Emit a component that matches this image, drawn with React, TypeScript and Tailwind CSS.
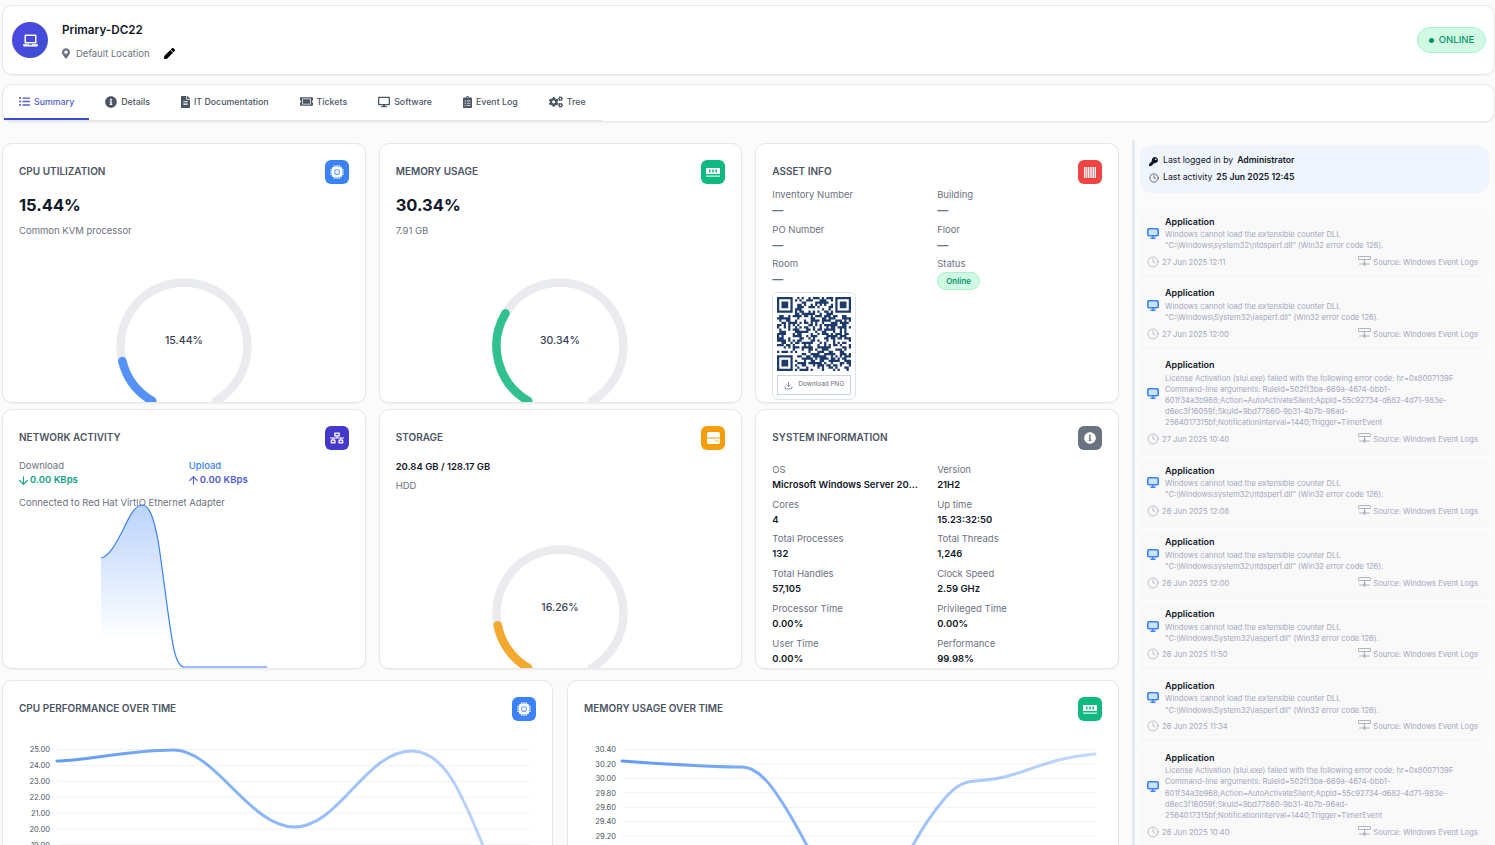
import type { ReactNode } from 'react';
import {
  FaClipboardList,
  FaCogs,
  FaDesktop,
  FaFileAlt,
  FaInfoCircle,
  FaKey,
  FaLaptop,
  FaListUl,
  FaMapMarkerAlt,
  FaNetworkWired,
  FaPen,
  FaTicketAlt,
} from 'react-icons/fa';
import { BsCpuFill } from 'react-icons/bs';
import { ArrowDown, ArrowUp, Clock, Download } from 'lucide-react';

const tabs = [
  { label: 'Summary', icon: <FaListUl size={11} />, active: true },
  { label: 'Details', icon: <FaInfoCircle size={12} /> },
  { label: 'IT Documentation', icon: <FaFileAlt className="h-3 w-[9px]" /> },
  { label: 'Tickets', icon: <FaTicketAlt size={13} /> },
  { label: 'Software', icon: <FaDesktop size={12} /> },
  { label: 'Event Log', icon: <FaClipboardList className="h-3 w-[9px]" /> },
  { label: 'Tree', icon: <FaCogs size={14} /> },
];

const ntds = ['Windows cannot load the extensible counter DLL', '"C:\\Windows\\system32\\ntdsperf.dll" (Win32 error code 126).'];
const ias = ['Windows cannot load the extensible counter DLL', '"C:\\Windows\\System32\\iasperf.dll" (Win32 error code 126).'];
const license = [
  'License Activation (slui.exe) failed with the following error code: hr=0x8007139F',
  'Command-line arguments: RuleId=502ff3ba-669a-4674-bbb1-',
  '601f34a3b968;Action=AutoActivateSilent;AppId=55c92734-d682-4d71-983e-',
  'd6ec3f16059f;SkuId=9bd77860-9b31-4b7b-96ad-',
  '2564017315bf;NotificationInterval=1440;Trigger=TimerEvent',
];

const events = [
  { lines: ntds, date: '27 Jun 2025 12:11' },
  { lines: ias, date: '27 Jun 2025 12:00' },
  { lines: license, date: '27 Jun 2025 10:40' },
  { lines: ntds, date: '26 Jun 2025 12:08' },
  { lines: ntds, date: '26 Jun 2025 12:00' },
  { lines: ias, date: '26 Jun 2025 11:50' },
  { lines: ias, date: '26 Jun 2025 11:34' },
  { lines: license, date: '26 Jun 2025 10:40' },
];

const systemInfo = [
  ['OS', 'Microsoft Windows Server 2022 Standard'],
  ['Version', '21H2'],
  ['Cores', '4'],
  ['Up time', '15.23:32:50'],
  ['Total Processes', '132'],
  ['Total Threads', '1,246'],
  ['Total Handles', '57,105'],
  ['Clock Speed', '2.59 GHz'],
  ['Processor Time', '0.00%'],
  ['Privileged Time', '0.00%'],
  ['User Time', '0.00%'],
  ['Performance', '99.98%'],
];

const assetInfo = ['Inventory Number', 'Building', 'PO Number', 'Floor'];

function MemoryIcon() {
  return (
    <svg width="14" height="11" viewBox="0 0 14 11" fill="#fff">
      <path fillRule="evenodd" d="M0 1h14v6H0zM3 2.6v2.8h1.5V2.6zM6.2 2.6v2.8h1.5V2.6zM9.5 2.6v2.8H11V2.6z" />
      <path d="M0 8.4h14v1.4H0z" fillOpacity="0.85" />
    </svg>
  );
}

function BarcodeIcon() {
  return (
    <svg width="12" height="11" viewBox="0 0 12 11" fill="#fff">
      <rect x="0" width="1.5" height="11" />
      <rect x="2.2" width="0.8" height="11" />
      <rect x="3.6" width="1.5" height="11" />
      <rect x="5.7" width="1" height="11" />
      <rect x="7.3" width="0.8" height="11" />
      <rect x="8.6" width="1.4" height="11" />
      <rect x="10.6" width="1.4" height="11" />
    </svg>
  );
}

function DiskIcon() {
  return (
    <svg width="13" height="12" viewBox="0 0 13 12" fill="#fff">
      <path d="M2 0h9a2 2 0 0 1 2 2v3.4H0V2a2 2 0 0 1 2-2z" />
      <path fillRule="evenodd" d="M0 6.4h13V10a2 2 0 0 1-2 2H2a2 2 0 0 1-2-2zM8.2 8.6v1.1h1.1V8.6zM10.2 8.6v1.1h1.1V8.6z" />
    </svg>
  );
}

function MonitorIcon() {
  return (
    <svg width="12" height="11" viewBox="0 0 12 11" fill="none" className="shrink-0">
      <rect x="0.8" y="0.8" width="10.4" height="7" rx="1" fill="#93c5fd" fillOpacity="0.45" stroke="#3b82f6" strokeWidth="1.6" />
      <path d="M6 8v2M3.5 10.2h5" stroke="#3b82f6" strokeWidth="1.4" />
    </svg>
  );
}

function SourceIcon() {
  return (
    <svg width="13" height="11" viewBox="0 0 13 11" fill="none" stroke="#9ca3af" strokeWidth="0.8" className="-mt-[2px]">
      <rect x="0.5" y="0.5" width="12" height="3" rx="0.5" />
      <path d="M6.5 3.5V9M1 8h3.8M8.2 8H12" />
      <circle cx="6.5" cy="8" r="1.4" />
    </svg>
  );
}

function Card({ className, children }: { className?: string; children: ReactNode }) {
  return (
    <div className={`relative overflow-hidden rounded-[10px] border border-[#e5e7eb] bg-white px-4 pt-4 shadow-[0_1px_2px_rgba(0,0,0,0.05)] ${className ?? ''}`}>
      {children}
    </div>
  );
}

function CardHead({ title, color, icon }: { title: string; color: string; icon: ReactNode }) {
  return (
    <div className="flex h-6 items-start justify-between">
      <span className="text-[10px] leading-[22px] font-semibold text-[#4b5563]">{title}</span>
      <span className={`flex h-6 w-6 items-center justify-center rounded-md text-white ${color}`}>{icon}</span>
    </div>
  );
}

function polar(angle: number, r: number) {
  const rad = (angle * Math.PI) / 180;
  return `${(72 - r * Math.sin(rad)).toFixed(2)} ${(72 + r * Math.cos(rad)).toFixed(2)}`;
}

function Gauge({ value, color, className }: { value: number; color: string; className: string }) {
  const r = 63.5;
  const end = 30 + value * 3;
  return (
    <svg width="144" height="144" viewBox="0 0 144 144" className={`mx-auto block ${className}`}>
      <path d={`M${polar(30, r)} A${r} ${r} 0 1 1 ${polar(330, r)}`} fill="none" stroke="#e9ebef" strokeWidth="8.5" strokeLinecap="round" />
      <path d={`M${polar(30, r)} A${r} ${r} 0 0 1 ${polar(end, r)}`} fill="none" stroke={color} strokeOpacity="0.85" strokeWidth="8.5" strokeLinecap="round" />
      <text x="72" y="70" textAnchor="middle" fontSize="10.5" fontWeight="500" fill="#374151">
        {value.toFixed(2)}%
      </text>
    </svg>
  );
}

function QrCode() {
  const n = 33;
  const finder = (x: number, y: number, ox: number, oy: number) => {
    const dx = x - ox;
    const dy = y - oy;
    if (dx < -1 || dy < -1 || dx > 7 || dy > 7) return null;
    if (dx < 0 || dy < 0 || dx > 6 || dy > 6) return false;
    if (dx === 0 || dy === 0 || dx === 6 || dy === 6) return true;
    return dx >= 2 && dx <= 4 && dy >= 2 && dy <= 4;
  };
  let seed = 40213;
  const next = () => {
    seed = (seed * 16807) % 2147483647;
    return seed / 2147483647;
  };
  const cells: string[] = [];
  for (let y = 0; y < n; y++) {
    for (let x = 0; x < n; x++) {
      const f = finder(x, y, 0, 0) ?? finder(x, y, n - 7, 0) ?? finder(x, y, 0, n - 7);
      const on = f === null ? next() > 0.48 : f;
      if (on) cells.push(`M${x} ${y}h1v1h-1z`);
    }
  }
  return (
    <svg viewBox={`0 0 ${n} ${n}`} className="block h-[74px] w-[74px]">
      <path d={cells.join('')} fill="#1e3a6b" />
    </svg>
  );
}

function AssetCell({ label }: { label: string }) {
  return (
    <div>
      <div className="leading-[15px]">{label}</div>
      <div className="text-[11px] leading-[16.5px] font-bold">—</div>
    </div>
  );
}

function EventRow({ lines, date }: { lines: string[]; date: string }) {
  return (
    <div className="rounded-md bg-[#f9f9fa] px-[7px] pt-[5.5px] pb-[6.4px] shadow-[0_1px_3px_rgba(0,0,0,0.03)]">
      <div className="flex items-center gap-[6px]">
        <MonitorIcon />
        <div>
          <div className="mb-[1px] text-[9px] leading-[12.5px] font-semibold text-[#111827]">Application</div>
          {lines.map((l, i) => (
            <div key={i} className="text-[7.6px] leading-[11.2px] text-[#a3a7ba]">{l}</div>
          ))}
        </div>
      </div>
      <div className="mt-1 flex h-[14px] items-center justify-between pr-[4px] text-[7.6px] text-[#a3a7ba]">
        <span className="flex items-center gap-[3px]">
          <Clock size={12} strokeWidth={1.3} className="-mt-[1px] text-[#9ca3af]" />
          {date}
        </span>
        <span className="flex items-center gap-[2px]">
          <SourceIcon />
          Source: Windows Event Logs
        </span>
      </div>
    </div>
  );
}

function TimeChart({ box, ticks, labelX, x1, x2, path, id }: {
  box: string;
  ticks: [string, number][];
  labelX: number;
  x1: number;
  x2: number;
  path: string;
  id: string;
}) {
  return (
    <svg viewBox={box} className="-mx-4 mt-[14px] block h-[130px] w-[549px]">
      <defs>
        <linearGradient id={id} gradientUnits="userSpaceOnUse" x1={x1} x2={x2} y1="0" y2="0">
          <stop offset="0" stopColor="#3b82f6" stopOpacity="0.8" />
          <stop offset="1" stopColor="#3b82f6" stopOpacity="0.3" />
        </linearGradient>
      </defs>
      {ticks.map(([label, y]) => (
        <g key={label}>
          <line x1={x1} x2={x2} y1={y} y2={y} stroke="#f0f1f3" />
          <text x={labelX} y={y + 2.7} textAnchor="end" fontSize="7.5" fill="#4b5563">{label}</text>
        </g>
      ))}
      <path d={path} fill="none" stroke={`url(#${id})`} strokeWidth="3" strokeLinecap="round" />
    </svg>
  );
}

export default function App() {
  return (
    <div className="h-[845px] w-[1495px] overflow-hidden bg-[#fbfbfb] [font-family:Inter,sans-serif]">
      {/* header */}
      <div className="ml-[2px] mt-[5px] flex h-[70px] w-[1493px] items-center justify-between rounded-[10px] border border-[#e5e7eb] bg-white pl-[9px] pr-2 shadow-[0_1px_2px_rgba(0,0,0,0.05)]">
        <div className="flex items-center gap-[14px]">
          <div className="flex h-9 w-9 items-center justify-center rounded-full bg-gradient-to-br from-[#4f46e5] to-[#3b4fd0] text-white">
            <FaLaptop size={15} />
          </div>
          <div className="pt-[3px]">
            <div className="text-[11.7px] leading-4 font-semibold text-[#111827]">Primary-DC22</div>
            <div className="mt-[8px] flex items-center text-[9.5px] leading-4 text-[#6b7280]">
              <FaMapMarkerAlt className="mr-[6px] h-[11px] w-2 text-[#6b7280]" />
              Default Location
              <FaPen size={11} className="ml-[14px] text-black" />
            </div>
          </div>
        </div>
        <div className="flex h-[26px] w-[69px] items-center justify-center gap-[5px] rounded-full border border-[#a7f3d0] bg-[#d1fae5] text-[9.5px] font-medium text-[#059669]">
          <span className="h-[5px] w-[5px] rounded-full bg-[#059669]" />
          ONLINE
        </div>
      </div>

      {/* tabs */}
      <div className="ml-[2px] mt-[9px] h-[38px] w-[1493px] rounded-[10px] border border-[#e5e7eb] bg-white pl-[1px] shadow-[0_1px_2px_rgba(0,0,0,0.05)]">
        <div className="flex h-[36px] w-[598px] gap-x-[1px] border-b border-[#e5e7eb]">
          {tabs.map((t) => (
            <div
              key={t.label}
              className={`flex shrink-0 items-center gap-1 border-b-2 px-[15px] text-[8.8px] font-medium whitespace-nowrap ${t.active ? 'border-[#3b4fd0] text-[#4f5bd5]' : 'border-transparent text-[#4b5563]'}`}
            >
              {t.icon}
              {t.label}
            </div>
          ))}
        </div>
      </div>

      <div className="mt-[21px] flex items-start">
        <div className="ml-[2px] w-[1117px] shrink-0">
          <div className="grid grid-cols-3 gap-x-[13px] gap-y-[6px]">
            <Card className="h-[260px]">
              <CardHead title="CPU UTILIZATION" color="bg-[#3b82f6]" icon={<BsCpuFill size={14} />} />
              <div className="mt-2 h-[26px] text-[16.5px] leading-[26px] font-bold text-[#111827]">15.44%</div>
              <div className="mt-[6px] text-[9.5px] leading-[14px] text-[#6b7280]">Common KVM processor</div>
              <Gauge value={15.44} color="#3b82f6" className="mt-[36px]" />
            </Card>
            <Card className="h-[260px]">
              <CardHead title="MEMORY USAGE" color="bg-[#10b981]" icon={<MemoryIcon />} />
              <div className="mt-2 h-[26px] text-[16.5px] leading-[26px] font-bold text-[#111827]">30.34%</div>
              <div className="mt-[6px] text-[9.5px] leading-[14px] text-[#6b7280]">7.91 GB</div>
              <Gauge value={30.34} color="#10b981" className="mt-[36px]" />
            </Card>
            <Card className="h-[260px]">
              <CardHead title="ASSET INFO" color="bg-[#ef4444]" icon={<BarcodeIcon />} />
              <div className="mt-[3px] grid grid-cols-2 gap-y-[3px] text-[9.5px] text-[#6b7280]">
                {assetInfo.map((label) => (
                  <AssetCell key={label} label={label} />
                ))}
                <AssetCell label="Room" />
                <div>
                  <div className="leading-[15px]">Status</div>
                  <span className="mt-[1px] flex h-[18px] w-[43px] items-center justify-center rounded-full border border-[#a7f3d0] bg-[#d1fae5] text-[8px] font-semibold text-[#059669]">Online</span>
                </div>
              </div>
              <div className="mt-[2px] w-[84px] rounded-md border border-[#dbe3ee] p-1">
                <QrCode />
                <div className="mt-1 flex h-5 items-center justify-center gap-[5px] border border-[#cbd5e1] text-[6.4px] text-[#6b7280]">
                  <Download size={9} />
                  Download PNG
                </div>
              </div>
            </Card>

            <Card className="h-[260px]">
              <CardHead title="NETWORK ACTIVITY" color="bg-[#4338ca]" icon={<FaNetworkWired size={14} />} />
              <div className="mt-[8px] grid grid-cols-2 gap-x-[10px] text-[9.5px]">
                <div>
                  <div className="leading-[15px] text-[#6b7280]">Download</div>
                  <div className="flex items-center leading-[14px] font-semibold text-[#10a37f]">
                    <ArrowDown size={13} strokeWidth={2} className="-ml-[2px]" />0.00 KBps
                  </div>
                </div>
                <div>
                  <div className="leading-[15px] font-medium text-[#3b82f6]">Upload</div>
                  <div className="flex items-center leading-[14px] font-semibold text-[#4f5bd5]">
                    <ArrowUp size={13} strokeWidth={2} className="-ml-[2px]" />0.00 KBps
                  </div>
                </div>
              </div>
              <div className="mt-[9px] text-[9.5px] leading-[14px] text-[#6b7280]">Connected to Red Hat VirtIO Ethernet Adapter</div>
              <svg viewBox="101 502 170 170" className="absolute top-[92px] left-[98px] h-[170px] w-[170px]">
                <defs>
                  <linearGradient id="netFill" gradientUnits="userSpaceOnUse" x1="0" x2="0" y1="505" y2="640">
                    <stop offset="0" stopColor="#3b82f6" stopOpacity="0.35" />
                    <stop offset="1" stopColor="#3b82f6" stopOpacity="0" />
                  </linearGradient>
                </defs>
                <path d="M101 558 C110 556 116 543 123 530 C129 517 135 505 142 505 C150 505 154 520 158 540 C163 570 168 620 174 650 C177 662 180 667 184 667 L101 667Z" fill="url(#netFill)" />
                <path d="M101 558 C110 556 116 543 123 530 C129 517 135 505 142 505 C150 505 154 520 158 540 C163 570 168 620 174 650 C177 662 180 667 184 667 L267 667" fill="none" stroke="#3b82f6" strokeWidth="1.2" />
              </svg>
            </Card>
            <Card className="h-[260px]">
              <CardHead title="STORAGE" color="bg-[#f59e0b]" icon={<DiskIcon />} />
              <div className="mt-[10px] text-[9.5px] leading-[14px] font-semibold text-[#111827]">20.84 GB / 128.17 GB</div>
              <div className="mt-[5px] text-[9.5px] leading-[14px] text-[#6b7280]">HDD</div>
              <Gauge value={16.26} color="#f59e0b" className="mt-[48px]" />
            </Card>
            <Card className="h-[260px]">
              <CardHead title="SYSTEM INFORMATION" color="bg-[#6b7280]" icon={<FaInfoCircle size={12} />} />
              <div className="mt-[12px] grid grid-cols-2 gap-y-[4.5px] text-[9.5px]">
                {systemInfo.map(([label, value]) => (
                  <div key={label} className="min-w-0 pr-[17px]">
                    <div className="leading-[16px] text-[#6b7280]">{label}</div>
                    <div className="truncate leading-[14.2px] font-semibold text-[#111827]">{value}</div>
                  </div>
                ))}
              </div>
            </Card>
          </div>

          <div className="mt-[11px] grid grid-cols-[551px_552px] gap-x-[14px]">
            <Card className="h-[300px]">
              <CardHead title="CPU PERFORMANCE OVER TIME" color="bg-[#3b82f6]" icon={<BsCpuFill size={14} />} />
              <TimeChart
                id="cpuLine"
                box="3 735 549 130"
                labelX={50}
                x1={57}
                x2={530}
                ticks={[['25.00', 749.5], ['24.00', 765.4], ['23.00', 781.3], ['22.00', 797.2], ['21.00', 813.1], ['20.00', 829], ['19.00', 844.9]]}
                path="M57 761 C90 760 130 750 174 750 C215 750 250 827 294 827 C340 827 365 751 412 751 C450 751 468 812 490 862"
              />
            </Card>
            <Card className="h-[300px]">
              <CardHead title="MEMORY USAGE OVER TIME" color="bg-[#10b981]" icon={<MemoryIcon />} />
              <TimeChart
                id="memLine"
                box="568 735 549 130"
                labelX={616}
                x1={622}
                x2={1097}
                ticks={[['30.40', 749.5], ['30.20', 764], ['30.00', 778.4], ['29.80', 792.8], ['29.60', 807.2], ['29.40', 821.6], ['29.20', 836]]}
                path="M622 761 C665 764 715 767 742 767 C760 767 775 790 790 815 C800 832 805 842 812 855 C830 890 890 890 908 855 C920 830 935 810 945 798 C955 787 962 782 975 781 C990 780 1000 779 1015 774 C1040 766 1060 757 1095 754"
              />
            </Card>
          </div>
        </div>

        {/* activity sidebar */}
        <div className="-mt-[3px] ml-[13px] h-[705px] w-[357px] shrink-0 overflow-hidden border-l-[3px] border-[#e2e8f0] pl-[5px]">
          <div className="mt-[5px] h-[48px] w-[349px] rounded-xl bg-[#f0f4fd] pl-[9px] pt-[8px] text-[8.7px] text-[#111827]">
            <div className="flex h-4 items-center">
              <FaKey size={9} className="mr-[5px]" />
              Last logged in by
              <span className="ml-[4px] font-semibold">Administrator</span>
            </div>
            <div className="mt-[1px] flex h-4 items-center">
              <Clock size={10} strokeWidth={1.4} className="mr-[4px]" />
              Last activity
              <span className="ml-[4px] font-semibold">25 Jun 2025 12:45</span>
            </div>
          </div>
          <div className="mt-[17px] flex w-[349px] flex-col gap-[6px]">
            {events.map((e, i) => (
              <EventRow key={i} lines={e.lines} date={e.date} />
            ))}
          </div>
        </div>
      </div>
    </div>
  );
}
